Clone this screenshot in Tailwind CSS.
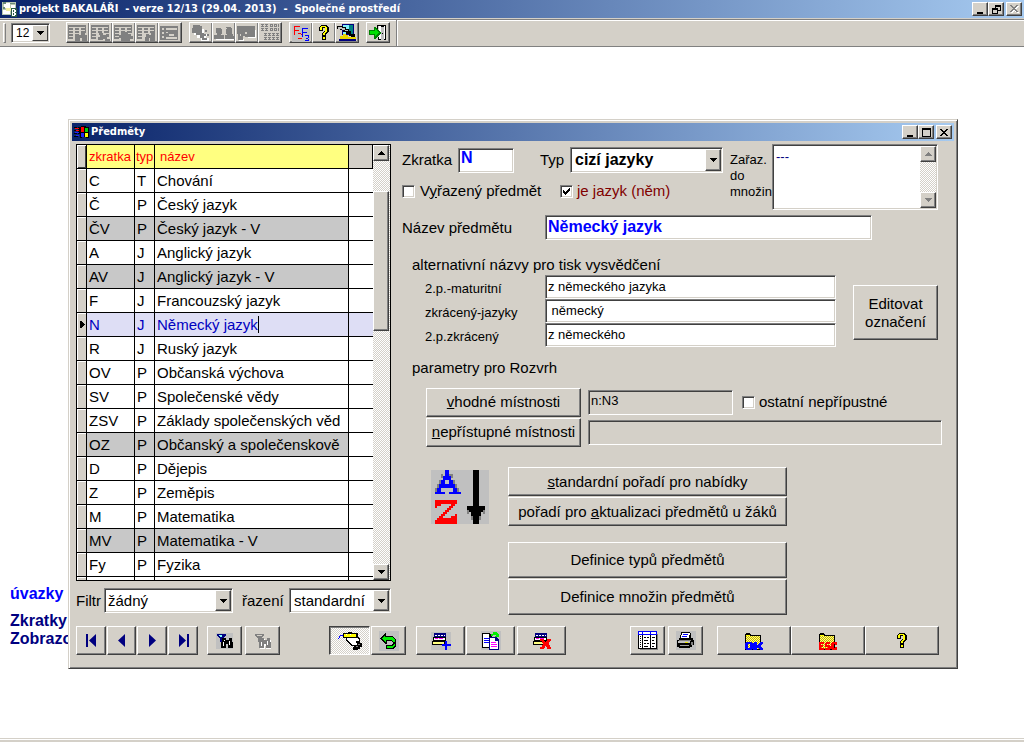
<!DOCTYPE html>
<html lang="cs">
<head>
<meta charset="utf-8">
<title>projekt BAKALÁŘI</title>
<script src="https://cdn.jsdelivr.net/npm/@tailwindcss/browser@4"></script>
</head>
<body class="min-h-screen flex flex-col bg-white text-black text-[15px] leading-[18px] font-['Liberation_Sans',Arial,sans-serif] [&_svg]:block [&_svg]:shrink-0 [&_button]:flex [&_button]:items-center [&_button]:justify-center [&_button]:shrink-0 [&_button]:bg-[#d4d0c8] [&_button]:border [&_button]:border-t-white [&_button]:border-l-white [&_button]:border-r-[#404040] [&_button]:border-b-[#404040] [&_button]:shadow-[inset_-1px_-1px_#808080] [&_button[aria-pressed=true]]:border-t-[#404040] [&_button[aria-pressed=true]]:border-l-[#404040] [&_button[aria-pressed=true]]:border-r-white [&_button[aria-pressed=true]]:border-b-white [&_button[aria-pressed=true]]:shadow-[inset_1px_1px_#808080] [&_.field]:border [&_.field]:border-t-[#808080] [&_.field]:border-l-[#808080] [&_.field]:border-r-white [&_.field]:border-b-white [&_.field]:shadow-[inset_1px_1px_#404040,inset_-1px_-1px_#d4d0c8] [&_.field]:outline-none [&_.field]:appearance-none [&_.field]:rounded-none">

<!-- shared symbols -->
<svg class="absolute w-0 h-0" aria-hidden="true" shape-rendering="crispEdges">
  <defs>
    <pattern id="dots" width="2" height="2" patternUnits="userSpaceOnUse"><path fill="#ffff80" d="M0 0h2v2H0z"/><path fill="#c8b400" d="M0 0h1v1H0zM1 1h1v1H1z"/></pattern>
    <symbol id="down" viewBox="0 0 7 4"><path d="M0 0h7v1H0zM1 1h5v1H1zM2 2h3v1H2zM3 3h1v1H3z"/></symbol>
    <symbol id="up" viewBox="0 0 7 4"><path d="M3 0h1v1H3zM2 1h3v1H2zM1 2h5v1H1zM0 3h7v1H0z"/></symbol>
    <symbol id="help" viewBox="0 0 10 15"><path fill="#000" d="M2 0h6v1h1v1h1v5H9v1H8v1H7v2H3V8h1V7h1V6h1V3H4v3H0V2h1V1h1zM3 11h4v4H3z"/><path fill="#ffff00" d="M2 1h5v1h1v5H7v1H6v2H4V8h1V7h1V2H3v3H1V2h1zM4 12h2v2H4z"/></symbol>
    <symbol id="table" viewBox="0 0 20 16"><path d="M0 0h18v2H0zM0 3h5v2H0zM7 3h4v2H7zM13 3h5v2h-5zM0 6h5v2H0zM7 6h4v2H7zM13 6h5v2h-5zM0 9h5v2H0zM0 12h5v2H0z"/><path d="M0 0h1v14H0zM17 0h1v7h-1z"/></symbol>
    <symbol id="binoc" viewBox="0 0 17 16"><path d="M6 5h4v2h3V5h3v4h1v6h-5v-4h-2v4H5V9h1z"/></symbol>
    <symbol id="rows" viewBox="0 0 20 18"><path fill="#000080" d="M3 1h12v4H3z"/><path fill="#fff" d="M4 3h2v1H4zM7 3h2v1H7zM10 3h2v1h-2zM13 3h1v1h-1z"/><path fill="#000" d="M2 5h13v4H2z"/><path fill="#fff" d="M3 6h11v2H3z"/><path fill="#ff00ff" d="M4 6h3v1H4zM8 6h4v1H8z"/><path fill="#000" d="M1 9h13v4H1z"/><path fill="#ffff80" d="M2 10h11v2H2z"/></symbol>
    <symbol id="folder" viewBox="0 0 20 18"><path fill="#000" d="M2 1h4v1h1v1h10v15H1V2h1z"/><path fill="#ffff00" d="M2 3h4v1h10v13H2z"/><path fill="url(#dots)" d="M2 4h14v13H2z"/></symbol>
  </defs>
</svg>

<header class="h-[18px] flex items-center bg-linear-to-r/srgb from-[#0a246a] to-[#a6caf0] text-white text-[11px] font-bold pl-[2px] pr-[2px] font-['DejaVu_Sans_Condensed','DejaVu_Sans',sans-serif]">
  <svg class="mr-px" width="16" height="16" shape-rendering="crispEdges"><path fill="#b8c8b0" d="M0 1h14v13H0z"/><path fill="#fff" d="M2 2h6v5H2zM9 4h4v4H9zM1 9h7v4H1z"/><path fill="#f4f0a0" d="M4 7h5v3H4z"/><path fill="#6a8a78" d="M1 1h3v2H1zM8 2h5v1H8zM1 6h2v2H1z"/><path fill="#2a5a48" d="M9 7h6v9H9z"/><path fill="#fff" d="M10 8h3v1h1v2h-1v1h1v2h-1v1h-3zM11 9v2h1V9zM11 12v2h1v-2z" fill-rule="evenodd"/></svg>
  <h1 class="flex-1 whitespace-pre">projekt BAKALÁŘI  - verze 12/13 (29.04. 2013)  -  Společné prostředí</h1>
  <button class="w-4 h-[14px]" aria-label="Minimalizovat"><svg width="10" height="9" shape-rendering="crispEdges"><path d="M2 7h6v2H2z"/></svg></button>
  <button class="w-4 h-[14px]" aria-label="Obnovit"><svg width="9" height="9" shape-rendering="crispEdges"><path fill-rule="evenodd" d="M3 0h6v6H6V5h2V2H4v1H3zM0 3h6v6H0zM1 5v3h4V5z"/></svg></button>
  <button class="w-4 h-[14px] ml-[2px]" aria-label="Zavřít"><svg width="10" height="9" shape-rendering="crispEdges"><path fill="#fff" d="M2 1h2v1h1v1h1V2h1V1h3v1H9v1H8v1H7v1h1v1h1v1h1v1H8V7H6V6H5v1H4v1H2V7h1V6h1V5h1V4H4V3H3V2H2z"/><path fill="#808080" d="M1 0h2v1h1v1h2V1h1V0h2v1H8v1H7v1H6v1h1v1h1v1h1v1H7V6H6V5H4v1H3v1H1V6h1V5h1V4h1V3H3V2H2V1H1z"/></svg></button>
</header>

<div class="h-[29px] bg-[#d4d0c8] border-b border-[#808080] flex pt-px" role="toolbar">
  <div class="flex-1 border-t border-[#808080] shadow-[inset_0_1px_#fff] flex">
  <div class="w-[397px] border-r border-[#808080] shadow-[1px_0_#fff] flex items-start pt-[2px] pl-[3px]">
    <span class="w-[3px] h-5 mt-px mr-[5px] border border-t-white border-l-white border-r-[#808080] border-b-[#808080]"></span>
    <span class="relative flex w-[39px] mt-px">
      <select aria-label="Velikost písma" class="field w-full h-5 bg-white pl-1 text-xs leading-4"><option>12</option></select>
      <span class="absolute right-[2px] top-[2px] w-4 h-4 flex items-center justify-center pointer-events-none bg-[#d4d0c8] border border-t-white border-l-white border-r-[#404040] border-b-[#404040]"><svg width="7" height="4"><use href="#down"/></svg></span>
    </span>
    <div class="flex ml-4 [&_button]:w-[24px] [&_button]:h-[21px] [&_button]:-mr-px text-[#808080] fill-[#808080]">
      <button aria-label="Tabulka 1"><svg width="20" height="16" shape-rendering="crispEdges"><use href="#table"/><path d="M7 9h4v1h2V8h4v2h2v6h-5v-3h-2v3H7z"/></svg></button>
      <button aria-label="Tabulka 2"><svg width="20" height="16" shape-rendering="crispEdges"><use href="#table"/><path d="M8 8h4v2h3V9h3v3h-2v2h3v2h-5v-2h-2v1H7v-3h2z"/></svg></button>
      <button aria-label="Tabulka 3"><svg width="20" height="16" shape-rendering="crispEdges"><use href="#table"/><path d="M7 7h7v2h3v2h2v3h-3v2H7v-3H5v-3h2z"/></svg></button>
      <button aria-label="Tabulka 4"><svg width="20" height="16" shape-rendering="crispEdges"><use href="#table"/><path d="M9 9h3v1h2V8h4v8h-5v-3h-1v3H8z"/></svg></button>
      <button aria-label="Tabulka 5"><svg width="20" height="16" shape-rendering="crispEdges"><path fill-rule="evenodd" d="M0 1h18v14H0zM2 3v2h2V3zM6 3v2h11V3zM2 7v2h2V7zM9 9v2h5V9zM2 11v2h2v-2zM6 12v2h11v-2zM6 7v1h2V7z"/></svg></button>
    </div>
    <div class="flex ml-2 [&_button]:w-[24px] [&_button]:h-[21px] [&_button]:-mr-px fill-[#808080]">
      <button aria-label="Osoby"><svg width="20" height="16" shape-rendering="crispEdges"><path fill="#fff" d="M3 2h8v2h2v5h4v2h-2v2h3v3h-8v-3H6v-3H3z"/><path d="M2 0h7v1h2v7h2v1h2v2h-2v2h3v2h-5v-2H9v-3H5V8H1V3h1zM14 5h2v2h-2zM16 9h2v2h-2z"/></svg></button>
      <button aria-label="Žáci"><svg width="20" height="16" shape-rendering="crispEdges"><path fill="#fff" d="M2 14h18v1H2z"/><path d="M2 3h5v1h1v5H7v1h3v4H0v-4h3V8H2zM12 2h5v1h1v6h1v2h1v3h-9v-4h2V9h-1V4h1z"/></svg></button>
      <button aria-label="Třídy"><svg width="20" height="16" shape-rendering="crispEdges"><path fill="#fff" d="M2 14h5v2H2zM18 5h1v8h-8v-1h7z"/><path d="M0 1h18v11H8v-1H6v4H1V9H0z"/><path fill="#d4d0c8" d="M8 7h2v2H8zM3 9h1v2H3z"/></svg></button>
      <button aria-label="Rozvrh"><svg width="20" height="17" shape-rendering="crispEdges"><path fill="none" stroke="#808080" stroke-width="3" stroke-dasharray="3 1" d="M1 1.500h7M10 1.500h9M1 5.500h7M10 5.500h9M4 10.500h15M4 14.500h15"/><path fill="none" stroke="#d4d0c8" d="M1 1.500h18M1 5.500h18M4 10.500h15M4 14.500h15" stroke-dasharray="1 1"/></svg></button>
    </div>
    <div class="flex ml-2 [&_button]:w-[24px] [&_button]:h-[21px] [&_button]:-mr-px">
      <button aria-label="F2 F3"><svg width="18" height="18" shape-rendering="crispEdges"><path fill="#c0c0c0" d="M0 0h18v18H0z"/><path fill="#f00" d="M2 2h6v1H3v3h4v1H3v4H2zM6 9h3v1h1v1H9v1H8v1H7v1h3v1H6v-1h1v-1h1v-1h1v-2H6z"/><path fill="#00f" d="M10 4h6v1h-5v3h4v1h-4v4h-1zM13 11h4v3h-1v1h1v2h-4v-1h3v-1h-2v-1h2v-2h-3z"/></svg></button>
      <button aria-label="Nápověda"><svg width="10" height="15" shape-rendering="crispEdges"><use href="#help"/></svg></button>
      <button aria-label="Počítač"><svg width="20" height="17" shape-rendering="crispEdges"><path fill="#000080" d="M5 0h12v11H5z"/><path fill="#80f0ff" d="M6 1h10v9H6z"/><path fill="#008080" d="M12 1h4v9h-4z"/><path fill="#000" d="M0 2h6v1h3v2h3v2h2v3h4v3h-4v-1h-2v-2H9V8H6V6H3V5H0z"/><path fill="#c0c0c0" d="M1 3h4v1h3v2h3v1H8V6H5V5H1z"/><path fill="#e8d800" d="M6 10h3v1h2v2h8v2H3v-3h3z"/><path fill="#000080" d="M2 15h17v2H2z"/></svg></button>
    </div>
    <div class="flex ml-2 [&_button]:w-[24px] [&_button]:h-[21px]">
      <button aria-label="Konec"><svg width="18" height="16" shape-rendering="crispEdges"><path fill="#000" d="M8 0h9v15H9v-3h1v1h1V1H9v3H8z"/><path fill="#fff" d="M10 1h2v13h-2zM15 1h1v13h-1z"/><path fill="#c0c0c0" d="M12 2h3v13h-3z"/><path fill="#000" d="M13 8h1v1h-1z"/><path fill="#008000" d="M5 2h2v1h1v1h1v1h1v1h1v1h1v2h-1v1h-1v1H9v1H8v1H7v1H5v-4H0V5h5z"/><path fill="#00e000" d="M6 4h1v1h1v1h1v1h1v1H9v1H8v1H7v1H6V9H1V6h5z"/></svg></button>
    </div>
  </div>
  </div>
</div>

<main class="relative flex-1 overflow-hidden">
  <div class="pt-[538px] pl-[10px] font-bold text-base leading-[18px] text-[#000080] w-fit">
    <a href="#" class="block text-[#0000ff] mb-[9px]">úvazky</a>
    <a href="#" class="block">Zkratky</a>
    <a href="#" class="block">Zobrazo</a>
  </div>

  <!-- subject editor window -->
  <section aria-label="Předměty" class="absolute left-[68px] top-[72px] w-[890px] bg-[#d4d0c8] border border-t-[#d4d0c8] border-l-[#d4d0c8] border-r-[#404040] border-b-[#404040] shadow-[inset_1px_1px_#fff,inset_-1px_-1px_#808080] p-[3px] pb-[13px]">
    <div class="h-[18px] flex items-center bg-linear-to-r/srgb from-[#0a246a] to-[#a6caf0] text-white text-[11px] font-bold pl-[2px] pr-[2px] font-['DejaVu_Sans_Condensed','DejaVu_Sans',sans-serif]">
      <svg class="mr-px" width="16" height="14" shape-rendering="crispEdges"><path fill="#000" d="M7 1h5v1h3v11h-3v-1H8v1H6V9H4V2h3zM0 2h3v1H0zM0 5h3v1H0zM0 8h3v1H0zM0 11h4v1H0z"/><path fill="#f00" d="M7 2h3v5H7zM1 3h4v1H1zM2 5h3v1H2z"/><path fill="#0c0" d="M11 3h3v4h-3z"/><path fill="#22f" d="M7 8h3v4H7zM1 7h4v1H1zM2 10h3v1H2z"/><path fill="#ff0" d="M11 8h3v4h-3z"/></svg>
      <h2 class="flex-1">Předměty</h2>
      <button class="w-4 h-[14px]" aria-label="Minimalizovat"><svg width="10" height="9" shape-rendering="crispEdges"><path d="M2 7h6v2H2z"/></svg></button>
      <button class="w-4 h-[14px]" aria-label="Maximalizovat"><svg width="9" height="9" shape-rendering="crispEdges"><path fill-rule="evenodd" d="M0 0h9v9H0zM1 2v6h7V2z"/></svg></button>
      <button class="w-4 h-[14px] ml-[2px]" aria-label="Zavřít"><svg width="8" height="7" shape-rendering="crispEdges"><path d="M0 0h2v1h1v1h2V1h1V0h2v1H7v1H6v1H5v1h1v1h1v1h1v1H6V6H5V5H3v1H2v1H0V6h1V5h1V4h1V3H2V2H1V1H0z"/></svg></button>
    </div>

    <div class="flex pl-1">
      <div class="w-[315px] pt-[3px]">
        <div class="h-[437px] border border-black flex overflow-hidden bg-white">
          <div class="flex-1 overflow-hidden">
          <table class="w-full table-fixed border-separate border-spacing-0 [&_td]:h-6 [&_td]:p-0 [&_td]:pl-[2px] [&_td]:border-b [&_td]:border-r [&_td]:border-black [&_td]:whitespace-nowrap [&_td]:overflow-hidden [&_td:last-child]:border-r-0 [&_td:first-child]:bg-[#d4d0c8] [&_td:first-child]:pl-[3px] [&_td:first-child]:shadow-[inset_1px_1px_#fff] [&_th]:h-6 [&_th]:p-0 [&_th]:pl-[2px] [&_th]:border-b [&_th]:border-r [&_th]:border-black [&_th]:text-left [&_th]:font-normal [&_th]:text-[13px] [&_th]:text-[#ff0000] [&_th]:whitespace-nowrap">
            <colgroup><col class="w-[10px]"><col class="w-[48px]"><col class="w-[20px]"><col class="w-[194px]"><col></colgroup>
            <thead><tr class="bg-[#ffff80]"><th class="bg-[#d4d0c8] shadow-[inset_1px_1px_#fff,inset_-1px_-1px_#404040]"></th><th>zkratka</th><th><span class="-ml-px">typ</span></th><th><span class="ml-[3px]">název</span></th><th class="bg-[#d4d0c8] border-r-0"></th></tr></thead>
            <tbody>
              <tr><td></td><td>C</td><td>T</td><td>Chování</td><td></td></tr>
              <tr><td></td><td>Č</td><td>P</td><td>Český jazyk</td><td></td></tr>
              <tr class="bg-[#c8c8c8]"><td></td><td>ČV</td><td>P</td><td>Český jazyk - V</td><td class="bg-white"></td></tr>
              <tr><td></td><td>A</td><td>J</td><td>Anglický jazyk</td><td></td></tr>
              <tr class="bg-[#c8c8c8]"><td></td><td>AV</td><td>J</td><td>Anglický jazyk - V</td><td class="bg-white"></td></tr>
              <tr><td></td><td>F</td><td>J</td><td>Francouzský jazyk</td><td></td></tr>
              <tr class="bg-[#dedef5] text-[#0000c0]" aria-selected="true"><td><svg width="5" height="7" shape-rendering="crispEdges"><path d="M0 0h2v1h1v1h1v1h1v1H4v1H3v1H2v1H0z"/></svg></td><td>N</td><td>J</td><td><span class="border-r border-black">Německý jazyk</span></td><td></td></tr>
              <tr><td></td><td>R</td><td>J</td><td>Ruský jazyk</td><td></td></tr>
              <tr><td></td><td>OV</td><td>P</td><td>Občanská výchova</td><td></td></tr>
              <tr><td></td><td>SV</td><td>P</td><td>Společenské vědy</td><td></td></tr>
              <tr><td></td><td>ZSV</td><td>P</td><td>Základy společenských věd</td><td></td></tr>
              <tr class="bg-[#c8c8c8]"><td></td><td>OZ</td><td>P</td><td>Občanský a společenskově</td><td class="bg-white"></td></tr>
              <tr><td></td><td>D</td><td>P</td><td>Dějepis</td><td></td></tr>
              <tr><td></td><td>Z</td><td>P</td><td>Zeměpis</td><td></td></tr>
              <tr><td></td><td>M</td><td>P</td><td>Matematika</td><td></td></tr>
              <tr class="bg-[#c8c8c8]"><td></td><td>MV</td><td>P</td><td>Matematika - V</td><td class="bg-white"></td></tr>
              <tr><td></td><td>Fy</td><td>P</td><td>Fyzika</td><td></td></tr>
              <tr><td></td><td></td><td></td><td></td><td></td></tr>
            </tbody>
          </table>
          </div>
          <div class="w-[17px] pr-px flex flex-col bg-[repeating-conic-gradient(#d4d0c8_0_25%,#ffffff_0_50%)] bg-[length:2px_2px]">
            <button class="h-4" aria-label="Nahoru"><svg width="7" height="4"><use href="#up"/></svg></button>
            <button class="h-[140px] mt-[30px]" aria-label="Posuvník"></button>
            <button class="h-4 mt-auto" aria-label="Dolů"><svg width="7" height="4"><use href="#down"/></svg></button>
          </div>
        </div>
        <div class="flex items-center mt-[7px] h-[25px]">
          <label for="filtr" class="w-7">Filtr</label>
          <span class="relative flex w-[129px]">
            <select id="filtr" class="field w-full h-[25px] bg-white pl-[3px]"><option>žádný</option></select>
            <span class="absolute right-[2px] top-[2px] w-4 h-[21px] flex items-center justify-center pointer-events-none bg-[#d4d0c8] border border-t-white border-l-white border-r-[#404040] border-b-[#404040] shadow-[inset_-1px_-1px_#808080]"><svg width="7" height="4"><use href="#down"/></svg></span>
          </span>
          <label for="razeni" class="w-[47px] ml-[9px]">řazení</label>
          <span class="relative flex flex-1">
            <select id="razeni" class="field w-full h-[25px] bg-white pl-1"><option>standardní</option></select>
            <span class="absolute right-[2px] top-[2px] w-4 h-[21px] flex items-center justify-center pointer-events-none bg-[#d4d0c8] border border-t-white border-l-white border-r-[#404040] border-b-[#404040] shadow-[inset_-1px_-1px_#808080]"><svg width="7" height="4"><use href="#down"/></svg></span>
          </span>
        </div>
      </div>

      <div class="flex-1 pl-[11px] whitespace-nowrap">
        <div class="flex items-start">
          <div class="w-[321px] pt-[6px]">
            <div class="flex items-center h-[26px]">
              <label for="zkratka" class="w-14">Zkratka</label>
              <input id="zkratka" value="N" class="field w-14 h-[25px] bg-white pl-[2px] pb-1 text-base font-bold text-[#0000ff]">
              <label for="typ" class="ml-[26px] w-[30px]">Typ</label>
              <span class="relative flex flex-1">
                <select id="typ" class="field w-full h-[26px] bg-white pl-1 text-base font-bold"><option>cizí jazyky</option></select>
                <span class="absolute right-[2px] top-[2px] w-4 h-[22px] flex items-center justify-center pointer-events-none bg-[#d4d0c8] border border-t-white border-l-white border-r-[#404040] border-b-[#404040] shadow-[inset_-1px_-1px_#808080]"><svg width="7" height="4"><use href="#down"/></svg></span>
              </span>
            </div>
            <div class="flex items-center h-[18px] mt-[9px]">
              <input type="checkbox" id="vyrazeny" class="field w-[13px] h-[13px] bg-white">
              <label for="vyrazeny" class="ml-[5px] w-[140px]">V<u>y</u>řazený předmět</label>
              <span class="relative flex">
                <input type="checkbox" id="jejazyk" checked class="field peer w-[13px] h-[13px] bg-white">
                <svg class="absolute left-[3px] top-[3px] invisible peer-checked:visible pointer-events-none" width="7" height="7" shape-rendering="crispEdges"><path d="M6 0h1v3H6v1H5v1H4v1H3v1H2V6H1V5H0V2h1v1h1v1h1V3h1V2h1V1h1z"/></svg>
              </span>
              <label for="jejazyk" class="ml-[4px] text-[#800000]">je jazyk (něm)</label>
            </div>
          </div>
          <label for="mnoziny" class="ml-[7px] pt-[11px] w-[42px] text-[13px] leading-4">Zařaz.<br>do<br>množin</label>
          <div class="field mt-[3px] w-[166px] h-[66px] bg-white p-px flex">
            <textarea id="mnoziny" class="flex-1 min-w-0 resize-none outline-none overflow-hidden pl-[2px] pt-[3px] text-[13px] leading-4 text-[#000080]">---</textarea>
            <div class="w-4 flex flex-col justify-between fill-[#808080] bg-[repeating-conic-gradient(#d4d0c8_0_25%,#ffffff_0_50%)] bg-[length:2px_2px]">
              <button class="h-4" aria-label="Nahoru"><svg width="7" height="4"><use href="#up"/></svg></button>
              <button class="h-4" aria-label="Dolů"><svg width="7" height="4"><use href="#down"/></svg></button>
            </div>
          </div>
        </div>

        <div class="flex items-center mt-[5px] h-[25px]">
          <label for="nazev" class="w-[143px]">Název předmětu</label>
          <input id="nazev" value="Německý jazyk" class="field w-[327px] h-[25px] bg-white pl-[2px] pb-[2px] text-base font-bold text-[#0000ff]">
        </div>

        <h3 class="mt-4 ml-[10px]">alternativní názvy pro tisk vysvědčení</h3>
        <div class="flex mt-px">
          <div class="pl-[23px] text-[13px] leading-4">
            <div class="flex items-center h-6"><label for="n1" class="w-[120px] pt-1">2.p.-maturitní</label><input id="n1" value="z německého jazyka" class="field w-[291px] h-6 bg-white pl-[2px] pb-[2px]"></div>
            <div class="flex items-center h-6"><label for="n2" class="w-[120px] pt-1">zkrácený-jazyky</label><input id="n2" value=" německý" class="field w-[291px] h-6 bg-white pl-[2px] pb-[2px]"></div>
            <div class="flex items-center h-6"><label for="n3" class="w-[120px] pt-1">2.p.zkrácený</label><input id="n3" value="z německého" class="field w-[291px] h-6 bg-white pl-[2px] pb-[2px]"></div>
          </div>
          <button class="ml-[17px] mt-[10px] w-[85px] h-[55px]">Editovat<br>označení</button>
        </div>

        <h3 class="mt-3 ml-[10px]">parametry pro Rozvrh</h3>
        <div class="mt-[10px] ml-6 flex items-center h-[30px]">
          <button class="w-[155px] h-[29px]"><span><u>v</u>hodné místnosti</span></button>
          <input aria-label="vhodné místnosti" value="n:N3" class="field ml-[7px] w-[145px] h-[25px] pl-[2px] pb-1 text-[13px]">
          <input type="checkbox" id="ostatni" class="field ml-[9px] w-[13px] h-[13px] bg-white">
          <label for="ostatni" class="ml-1">ostatní nepřípustné</label>
        </div>
        <div class="ml-6 flex items-center h-[30px]">
          <button class="w-[155px] h-[29px]"><span><u>n</u>epřístupné místnosti</span></button>
          <input aria-label="nepřístupné místnosti" class="field ml-[7px] w-[354px] h-[25px] pl-[2px] text-[13px]">
        </div>

        <div class="flex mt-5 ml-[29px]">
          <svg class="mt-[3px]" width="58" height="54" viewBox="0 0 29 27" shape-rendering="crispEdges"><path fill="#c0c0c0" d="M0 0h29v27H0z"/><path fill="#808080" d="M5 2h1v2H5zM9 2h2v2H9zM4 5h1v2H4zM11 5h1v2h-1zM3 7h1v2H3zM12 7h1v2h-1zM2 9h1v2H2zM13 9h1v2h-1zM18 20h1v2h-1zM26 20h1v2h-1zM20 23h1v2h-1zM24 23h1v2h-1z"/><path fill="#00f" fill-rule="evenodd" d="M7 0h2v3h1v2h1v2h1v2h1v2h2v1H9v-1h2V9H5v2h2v1H2v-1h1V9h1V7h1V5h1V3h1zM7 5v2h2V5z"/><path fill="#f00" d="M2 15h11v2h-1v1h-1v1h-1v1H9v1H8v1H7v1H6v1h4v-1h2v-1h1v5H2v-2h1v-1h1v-1h1v-1h1v-1h1v-1h1v-1h1v-1h1v-1H5v1H3v1H2z"/><path d="M21 0h3v18h3v2h-1v1h-1v2h-1v4h-3v-4h-1v-2h-1v-1h-1v-2h3z"/></svg>
          <div class="ml-[19px] w-[279px] flex flex-col gap-px">
            <button class="h-[29px]"><span><u>s</u>tandardní pořadí pro nabídky</span></button>
            <button class="h-[29px]"><span>pořadí pro <u>a</u>ktualizaci předmětů u žáků</span></button>
            <button class="h-9 mt-[15px]">Definice typů předmětů</button>
            <button class="h-9">Definice množin předmětů</button>
          </div>
        </div>
      </div>
    </div>

    <footer class="flex mt-[11px] pl-1 pr-[15px] [&_button]:h-[29px]">
      <div class="flex fill-[#000080] gap-px">
        <button class="w-[30px]" aria-label="První"><svg width="11" height="13"><path d="M0 0h2v13H0zM10 0v13L3 6.500z"/></svg></button>
        <button class="w-[29px]" aria-label="Předchozí"><svg width="11" height="13"><path d="M9 0v13L2 6.500z"/></svg></button>
        <button class="w-[30px]" aria-label="Další"><svg width="11" height="13"><path d="M2 0v13l7-6.500z"/></svg></button>
        <button class="w-[30px]" aria-label="Poslední"><svg width="11" height="13"><path d="M9 0h2v13H9zM1 0v13l7-6.500z"/></svg></button>
      </div>
      <button class="ml-[9px] w-[35px]" aria-label="Hledat"><svg width="17" height="16" shape-rendering="crispEdges"><path fill="#c0c0c0" d="M0 0h17v16H0z"/><path fill="#000080" d="M1 1h9v2H9v1H8v1H7v4H4V5H3V4H2V3H1z"/><path fill="#80ffff" d="M3 2h3v1H3zM4 3h2v1H4z"/><use href="#binoc" width="17" height="16"/><path fill="#fff" d="M7 9h1v4H7zM13 8h1v4h-1zM8 7h1v1H8z"/></svg></button>
      <button class="ml-[3px] w-[35px]" aria-label="Hledat další"><svg width="17" height="16" shape-rendering="crispEdges" fill="#808080"><path fill="#fff" d="M11 7h6v9h-5v-3h-1v3H6V9h1V6h4z"/><path d="M1 1h9v2H9v1H8v1H7v4H4V5H3V4H2V3H1z"/><path fill="#d4d0c8" d="M3 2h5v1H3z"/><use href="#binoc" width="17" height="16"/><path fill="#fff" d="M7 9h1v4H7zM13 8h1v4h-1z"/></svg></button>
      <button aria-pressed="true" class="ml-[49px] w-[41px] bg-[repeating-conic-gradient(#d4d0c8_0_25%,#ffffff_0_50%)] bg-[length:2px_2px]" aria-label="Upravit"><svg width="28" height="20" shape-rendering="crispEdges"><path fill="#fff" stroke="#000" d="M9 3.500l4-2 5 1 5 5 1 5-3 3-5-1-5-5z"/><path fill="#000" d="M7 2h15v5H7zM20 10h4v2h2v4h-2v2h-2v1h-5v-3h2v-2h2v-2h-1z"/><path fill="#ff0" d="M8 3h12v3H8z"/><path fill="#fff" d="M10 3h1v1h-1zM14 3h1v1h-1z"/><path fill="#808080" d="M22 13h2v1h-2zM20 15h2v1h-2z"/><path fill="#00f" d="M2 7h1v1H2zM3 5h1v2H3zM4 4h3v1H4z"/></svg></button>
      <button class="ml-px w-[35px]" aria-label="Zpět"><svg width="20" height="20" shape-rendering="crispEdges"><path fill="#c0c0c0" d="M0 0h20v20H0z"/><path fill="#000" d="M1 7l6-5v3h6l4 4v6l-3 3H7v-4h5l2-2v-1l-2-1H8v3H6z"/><path fill="#0e0" d="M3 7l3-3v2h7l3 3v2h-2l-2-2H7v2H6zM8 15h5l3-3v2l-2 3H8z"/></svg></button>
      <button class="ml-[10px] w-[49px]" aria-label="Přidat"><svg width="20" height="18" shape-rendering="crispEdges"><path fill="#c0c0c0" d="M0 0h20v18H0z"/><use href="#rows" width="20" height="18"/><path fill="#00f" d="M14 9h2v3h4v2h-4v4h-2v-4h-3v-2h3z"/></svg></button>
      <button class="ml-px w-[49px]" aria-label="Kopírovat"><svg width="20" height="19" shape-rendering="crispEdges"><path fill="#c0c0c0" d="M0 0h20v19H0z"/><path fill="#000" d="M1 2h8l2 3v12H1z"/><path fill="#fff" d="M2 3h6v3h2v10H2z"/><path fill="#00f" d="M3 7h5v1H3zM3 9h5v1H3zM3 11h5v1H3z"/><path fill="#000080" d="M8 6h7l3 3v10H8z"/><path fill="#fff" d="M9 7h5v3h3v8H9z"/><path fill="#f0f" d="M10 11h5v1h-5zM10 13h6v1h-6zM10 15h6v1h-6z"/><path fill="#0e0" d="M10 3h2V1h4v1h1v1h1v3h-4V5h1V4h-3v1h-2z"/></svg></button>
      <button class="ml-[2px] w-[49px]" aria-label="Smazat"><svg width="20" height="18" shape-rendering="crispEdges"><use href="#rows" width="20" height="18"/><path fill="#f00" d="M8 7h4v2h1v1h1V9h1V7h4v2h-1v1h-1v3h1v2h1v2h-4v-2h-1v-1h-1v2h-1v1H8v-2h2v-2h1v-2h-1V9H8z"/></svg></button>
      <div class="flex-1"></div>
      <button class="w-[35px]" aria-label="Tabulka"><svg width="20" height="19" shape-rendering="crispEdges"><path fill="#808080" d="M2 17h18v2H2zM18 3h2v15h-2z"/><path fill="#000" d="M0 0h19v18H0z"/><path fill="#fff" d="M1 4h3v13H1zM5 4h7v13H5zM13 4h5v13h-5z"/><path fill="#00f" d="M0 0h19v4H0z"/><path fill="#fff" d="M1 1h3v2H1zM5 1h7v2H5zM13 1h5v2h-5z"/><path fill="none" stroke="#000" stroke-dasharray="1 1" d="M2.500 5v12"/><path d="M6 6h2v1H6zM9 6h2v1H9zM6 9h4v1H6zM6 12h2v1H6zM9 12h2v1H9zM6 15h4v1H6zM14 6h3v1h-3zM14 9h2v1h-2zM14 12h3v1h-3zM14 15h2v1h-2z"/></svg></button>
      <button class="ml-[3px] w-[35px]" aria-label="Tisk"><svg width="20" height="19" shape-rendering="crispEdges"><path fill="#c0c0c0" d="M0 0h20v19H0z"/><path d="M5 1h9v1h1v5h2v2h1v5h-2v2h-2v1H3v-1H1V9h2V7h1V4h1z"/><path fill="#fff" d="M6 2h8l-1 5H5z"/><path fill="#00f" d="M7 3h5v1H7zM6 5h5v1H6z"/><path fill="#808080" d="M3 9h12v1H3zM15 11h2v3h-2z"/><path fill="#c0c0c0" d="M2 10h12v2H2z"/><path fill="#e8e800" d="M9 11h3v1H9z"/><path fill="#a0a0a0" d="M4 14h9v1H4z"/></svg></button>
      <button class="ml-[14px] w-[74px]" aria-label="OK"><svg width="20" height="18" shape-rendering="crispEdges"><use href="#folder" width="20" height="18"/><path fill="#00f" fill-rule="evenodd" d="M2 10h6v1h2v-1h3v3h1v-1h1v-1h1v-1h3v2h-1v1h-1v2h1v1h1v2h-3v-1h-1v-1h-2v2H9v-1H8v1H2v-1H1v-6h1zM4 12v4h2v-4z"/></svg></button>
      <button class="w-[74px]" aria-label="Esc"><svg width="20" height="18" shape-rendering="crispEdges"><use href="#folder" width="20" height="18"/><path fill="#f00" d="M1 10h5v2H3v1h2v2H3v1h3v2H1zM8 10h4v2H9v1h3v1h1v3h-1v1H7v-2h3v-1H7v-4h1zM14 10h5v3h-2v-1h-1v4h1v-1h2v3h-5v-1h-1v-6h1z"/></svg></button>
      <button class="w-[74px]" aria-label="Nápověda"><svg width="10" height="15" shape-rendering="crispEdges"><use href="#help"/></svg></button>
    </footer>
  </section>
</main>
<div class="h-[4px] bg-[#d4d0c8] border-t border-[#d4d0c8] shadow-[inset_0_1px_#fff]" role="status"></div>
</body>
</html>
